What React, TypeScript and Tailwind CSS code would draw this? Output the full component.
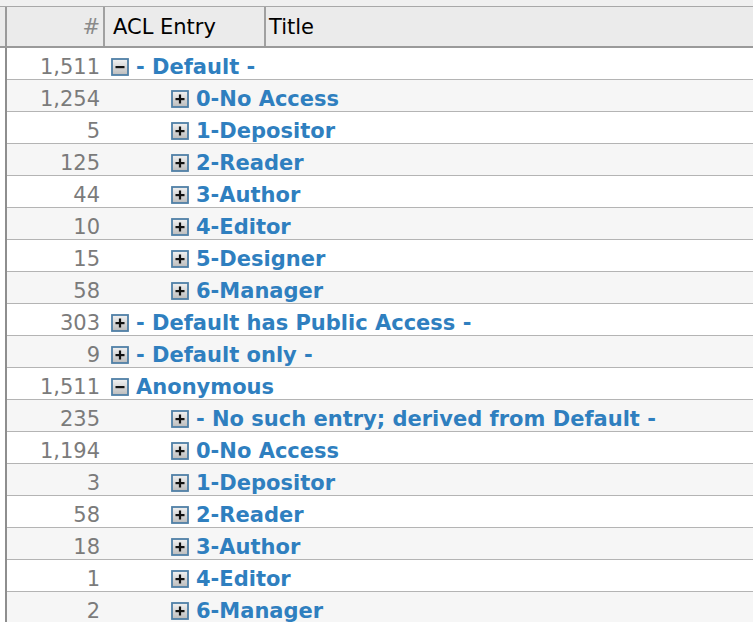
import React from 'react';

type Row = {
  count: string;
  label: string;
  level: 0 | 1;
  open?: boolean;
};

const rows: Row[] = [
  { count: '1,511', label: '- Default -', level: 0, open: true },
  { count: '1,254', label: '0-No Access', level: 1 },
  { count: '5', label: '1-Depositor', level: 1 },
  { count: '125', label: '2-Reader', level: 1 },
  { count: '44', label: '3-Author', level: 1 },
  { count: '10', label: '4-Editor', level: 1 },
  { count: '15', label: '5-Designer', level: 1 },
  { count: '58', label: '6-Manager', level: 1 },
  { count: '303', label: '- Default has Public Access -', level: 0 },
  { count: '9', label: '- Default only -', level: 0 },
  { count: '1,511', label: 'Anonymous', level: 0, open: true },
  { count: '235', label: '- No such entry; derived from Default -', level: 1 },
  { count: '1,194', label: '0-No Access', level: 1 },
  { count: '3', label: '1-Depositor', level: 1 },
  { count: '58', label: '2-Reader', level: 1 },
  { count: '18', label: '3-Author', level: 1 },
  { count: '1', label: '4-Editor', level: 1 },
  { count: '2', label: '6-Manager', level: 1 },
];

function Twisty({ open }: { open?: boolean }) {
  return (
    <svg width="18" height="18" viewBox="0 0 18 18" className="shrink-0">
      <defs>
        <linearGradient id="twg" x1="0" y1="0" x2="0" y2="1">
          <stop offset="0" stopColor="#f2f2f2" />
          <stop offset="1" stopColor="#bcbcbc" />
        </linearGradient>
      </defs>
      <rect x="1" y="1" width="16" height="16" fill="url(#twg)" stroke="#4f7fa6" strokeWidth="1.8" />
      <rect x="4.5" y="8" width="9" height="2.2" fill="#111" />
      {!open && <rect x="7.9" y="4.5" width="2.2" height="9" fill="#111" />}
    </svg>
  );
}

export default function App() {
  return (
    <div
      className="w-[753px] h-[622px] overflow-hidden bg-white"
      style={{ fontFamily: '"DejaVu Sans", Verdana, sans-serif' }}
    >
      {/* top strip */}
      <div className="h-[7px] bg-[#f0f0f0] border-b border-[#a8a8a8]" />

      {/* header */}
      <div className="flex h-[41px] bg-[#ebebeb] border-b-2 border-[#9a9a9a]">
        <div className="w-[5px] shrink-0" />
        <div className="w-[2px] shrink-0 bg-[#9a9a9a]" />
        <div className="w-[96px] shrink-0 flex items-center justify-end pr-[3px] pt-[3px] text-[21px] text-[#8a8a8a]">
          #
        </div>
        <div className="w-[2px] shrink-0 bg-[#a0a0a0]" />
        <div className="w-[159px] shrink-0 flex items-center pl-[8px] pt-[3px] text-[21px] text-black">
          ACL Entry
        </div>
        <div className="w-[2px] shrink-0 bg-[#a0a0a0]" />
        <div className="flex-1 flex items-center pl-[3px] pt-[3px] text-[21px] text-black">Title</div>
      </div>

      {/* body */}
      <div className="flex">
        <div className="w-[5px] shrink-0" />
        <div className="w-[2px] shrink-0 bg-[#8e8e8e] h-[574px]" />
        <div className="flex-1">
          {rows.map((r, i) => (
            <div
              key={i}
              className={`flex items-center h-[32px] pt-[7px] border-b border-[#b4b4b4] ${
                i % 2 === 0 ? 'bg-white' : 'bg-[#f6f6f6]'
              }`}
            >
              <div className="w-[96px] shrink-0 text-right pr-[3px] text-[21px] text-[#7b7b7b] leading-none">
                {r.count}
              </div>
              <div
                className={`flex items-center gap-[7px] ${r.level === 0 ? 'pl-[8px]' : 'pl-[68px]'}`}
              >
                <Twisty open={r.open} />
                <span className="text-[21px] font-bold text-[#2f7fbf] leading-none whitespace-nowrap">
                  {r.label}
                </span>
              </div>
            </div>
          ))}
        </div>
      </div>
    </div>
  );
}
